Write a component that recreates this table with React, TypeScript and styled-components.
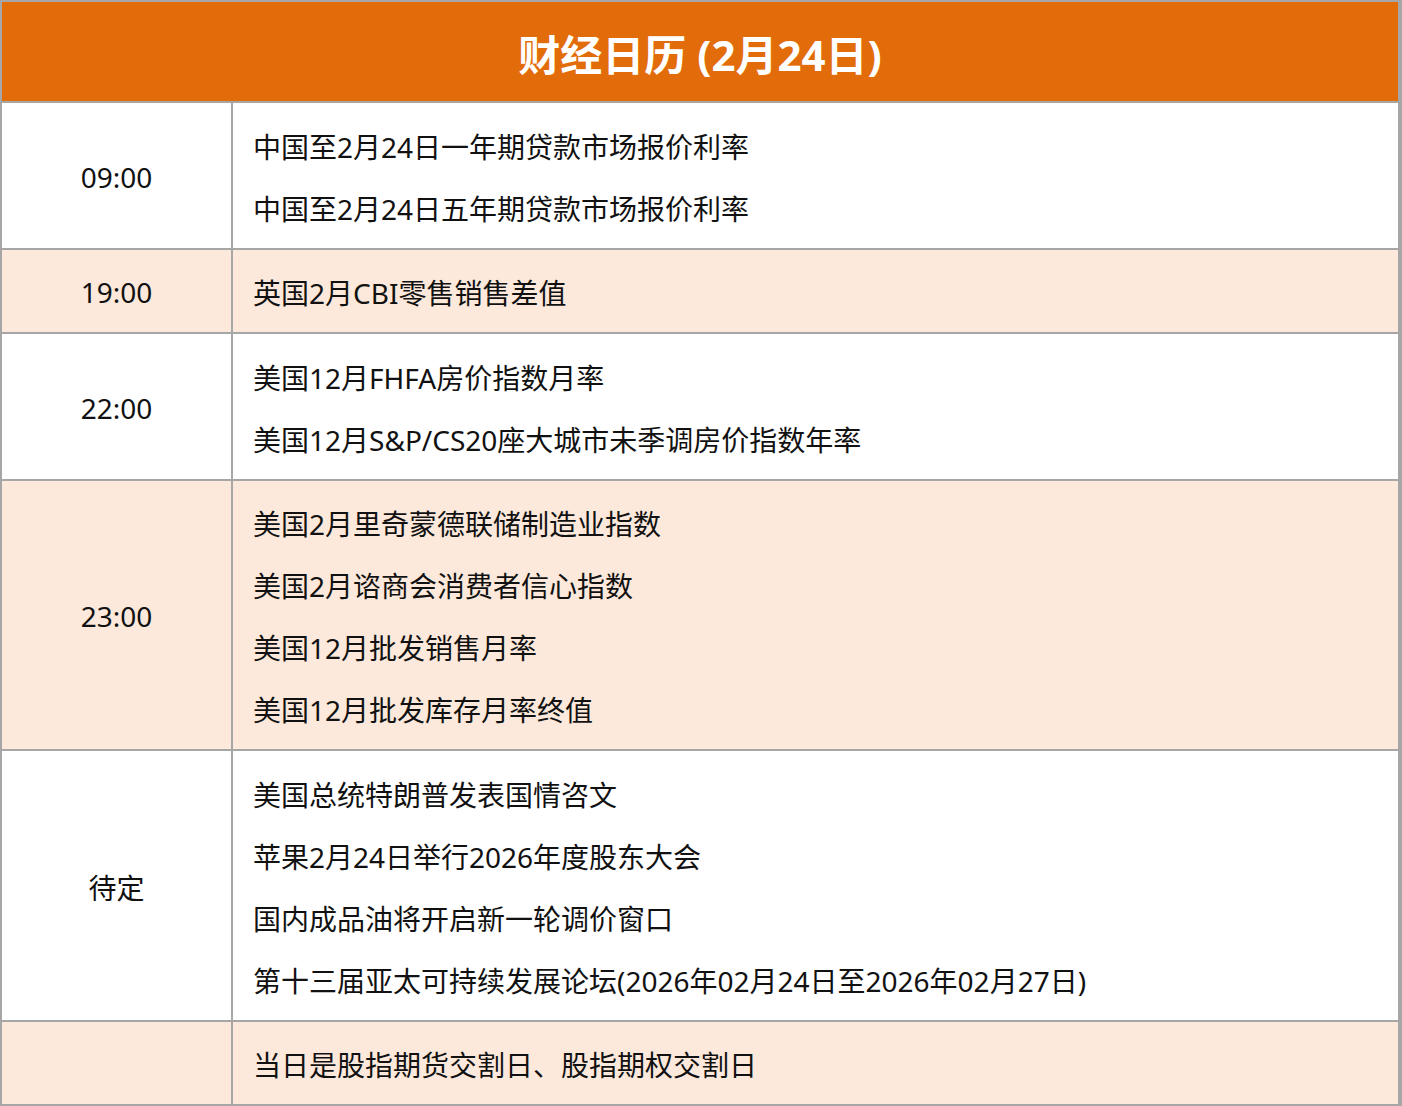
import styled, { createGlobalStyle } from "styled-components"

const GlobalStyle = createGlobalStyle`
    html, body {
        margin: 0;
        padding: 0;
        background: #ffffff;
    }
    body {
        font-family: "Noto Sans", "Noto Sans CJK SC", sans-serif;
        color: #111111;
    }
`

type Entry = {
    time: string
    items: string[]
}

const entries: Entry[] = [
    {
        time: '09:00',
        items: [
            '中国至2月24日一年期贷款市场报价利率',
            '中国至2月24日五年期贷款市场报价利率',
        ],
    },
    {
        time: '19:00',
        items: ['英国2月CBI零售销售差值'],
    },
    {
        time: '22:00',
        items: [
            '美国12月FHFA房价指数月率',
            '美国12月S&P/CS20座大城市未季调房价指数年率',
        ],
    },
    {
        time: '23:00',
        items: [
            '美国2月里奇蒙德联储制造业指数',
            '美国2月谘商会消费者信心指数',
            '美国12月批发销售月率',
            '美国12月批发库存月率终值',
        ],
    },
    {
        time: '待定',
        items: [
            '美国总统特朗普发表国情咨文',
            '苹果2月24日举行2026年度股东大会',
            '国内成品油将开启新一轮调价窗口',
            '第十三届亚太可持续发展论坛(2026年02月24日至2026年02月27日)',
        ],
    },
    {
        time: '',
        items: ['当日是股指期货交割日、股指期权交割日'],
    },
]

export default function App() {
    return (
        <>
            <GlobalStyle />
            <Calendar>
                <Header>财经日历 (2月24日)</Header>
                {entries.map((entry, i) => (
                    <Row key={i} $shaded={i % 2 === 1}>
                        <TimeCell>{entry.time}</TimeCell>
                        <EventCell>
                            {entry.items.map(item => (
                                <EventLine key={item}>{item}</EventLine>
                            ))}
                        </EventCell>
                    </Row>
                ))}
            </Calendar>
        </>
    )
}

const Calendar = styled.div`
    width: 1400px;
    display: grid;
    grid-template-columns: 229px 1165px;
    gap: 2px;
    padding: 2px;
    background: #a6a6a6;
`

const Header = styled.div`
    grid-column: 1 / -1;
    height: 99px;
    background: #e36c0a;
    color: #ffffff;
    font-size: 42px;
    font-weight: 700;
    display: flex;
    align-items: center;
    justify-content: center;
    padding-top: 2px;
    box-sizing: border-box;
`

const Row = styled.div<{ $shaded: boolean }>`
    display: contents;
    & > div {
        background: ${p => (p.$shaded ? '#fce9db' : '#ffffff')};
    }
`

const TimeCell = styled.div`
    display: flex;
    align-items: center;
    justify-content: center;
    font-size: 28px;
    padding-top: 3px;
`

const EventCell = styled.div`
    padding: 12.5px 20px 8px 20px;
    display: flex;
    flex-direction: column;
`

const EventLine = styled.div`
    font-size: 28px;
    line-height: 62px;
    white-space: nowrap;
`
